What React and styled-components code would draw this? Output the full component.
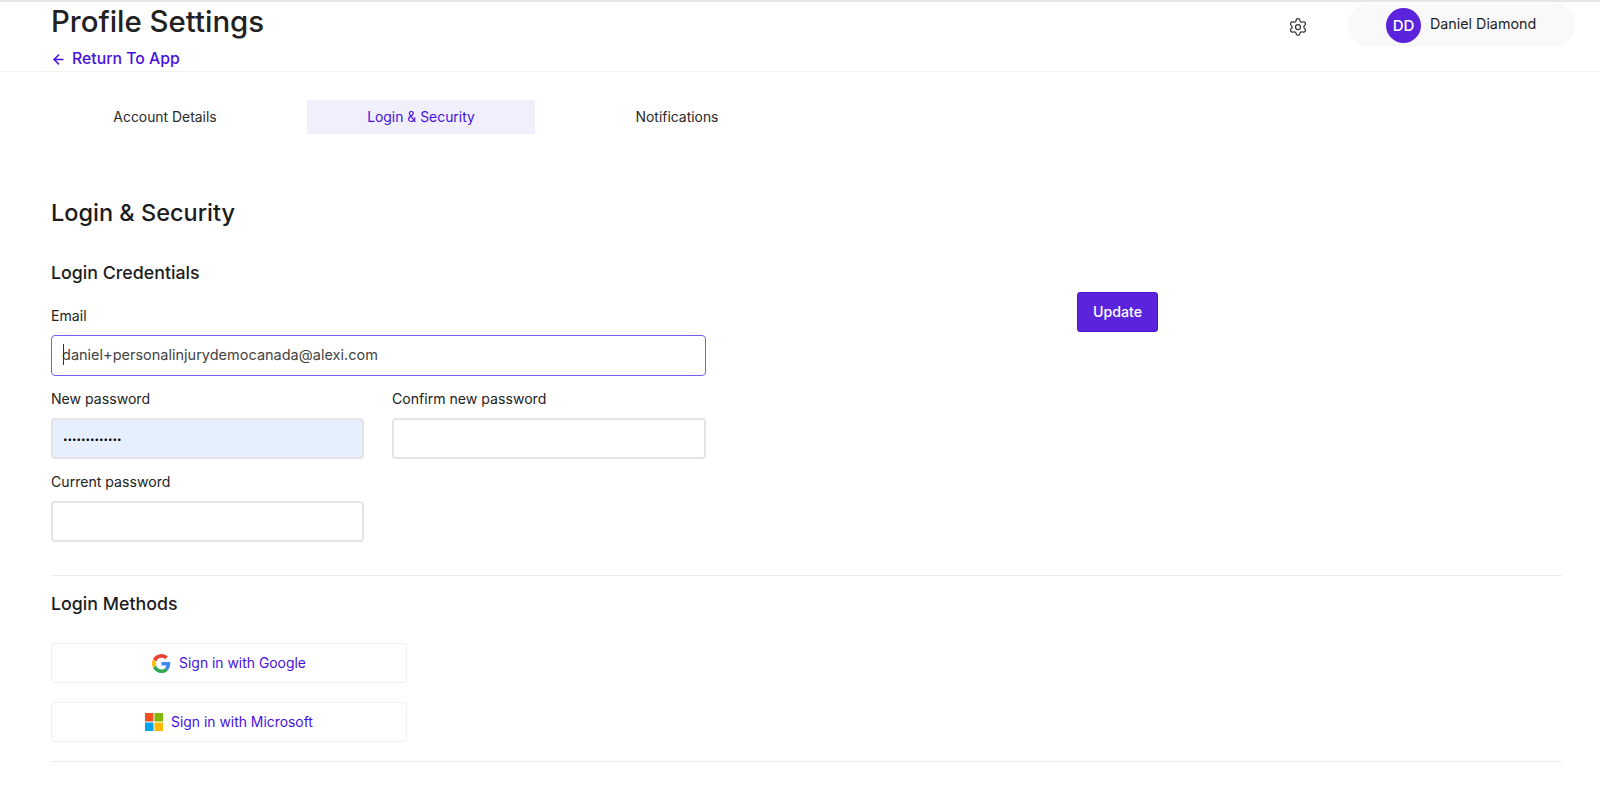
import React from 'react';
import styled, { createGlobalStyle } from 'styled-components';
import { Settings, ArrowLeft } from 'lucide-react';

const Global = createGlobalStyle`
  html, body { margin: 0; padding: 0; background: #fff; }
  body { font-family: Inter, "Open Sans", sans-serif; color: #1c1c1e; }
  * { box-sizing: border-box; }
`;
const Page = styled.div`height: 809px; overflow: hidden; border-top: 2px solid #e6e6e8;`;
const Header = styled.header`
  height: 70px; padding: 0 25px 0 51px; border-bottom: 1px solid #f3f3f4;
  display: flex; justify-content: space-between; align-items: flex-start;
`;
const TitleBlock = styled.div`display: flex; flex-direction: column; align-items: flex-start;`;
const Title = styled.h1`margin: 2px 0 0; font-size: 29.4px; line-height: 36px; font-weight: 500; color: #222;`;
const BackLink = styled.a`
  margin-top: 8px; display: flex; align-items: center; gap: 6px;
  font-size: 15.8px; line-height: 22px; font-weight: 500; color: #4610e0;
`;
const HeaderRight = styled.div`display: flex; align-items: center; gap: 40px; margin-top: 1px;`;
const Gear = styled(Settings)`color: #333; display: block; margin-top: 3px;`;
const UserPill = styled.div`
  width: 227px; height: 44px; border-radius: 22px; background: #f9f9fa;
  display: flex; align-items: center; gap: 9px; padding-left: 38px;
`;
const Avatar = styled.div`
  width: 35px; height: 35px; border-radius: 50%; background: #5b24dc; color: #fff;
  display: flex; align-items: center; justify-content: center; font-size: 15px; font-weight: 500;
`;
const UserName = styled.span`font-size: 14.3px; color: #1e1e28; margin-bottom: 3px;`;
const Tabs = styled.nav`display: flex; margin: 28px 0 0 51px;`;
const Tab = styled.div`
  width: ${p => p.$w}px; height: 34px; margin-right: ${p => p.$mr}px;
  display: flex; align-items: center; justify-content: center;
  font-size: 13.9px; color: ${p => (p.$active ? '#4610e0' : '#2a2a2a')};
  background: ${p => (p.$active ? '#f1effc' : 'transparent')};
`;
const Content = styled.main`padding: 0 38px 0 51px;`;
const PageHeading = styled.h2`margin: 63px 0 0; font-size: 23.5px; line-height: 32px; font-weight: 500; color: #1c1c1e;`;
const SectionHeading = styled.h3`
  margin: ${p => p.$mt}px 0 0; font-size: 17.8px; line-height: 24px; font-weight: 500; color: #1c1c1e;
`;
const CredRow = styled.div`display: flex; align-items: flex-start; margin-top: 21px;`;
const Form = styled.div`
  width: 655px; display: grid; grid-template-columns: 313px 1fr; column-gap: 28px; row-gap: 13px;
`;
const Field = styled.label`display: block; grid-column: ${p => (p.$full ? '1 / -1' : 'auto')};`;
const LabelText = styled.div`font-size: 14.1px; line-height: 20px; color: #222; margin-bottom: 9px;`;
const InputWrap = styled.div`position: relative;`;
const Input = styled.input`
  display: block; width: 100%; height: 41px; padding: 0 10px ${p => (p.$focus ? 2 : 0)}px; border-radius: 4px; outline: none;
  font-family: inherit; font-size: ${p => (p.$auto ? 8 : 14.5)}px; color: ${p => (p.$auto ? '#000' : '#444')};
  border: ${p => (p.$focus ? '1px solid #7a5cf0' : '2px solid #e4e4e6')};
  background: ${p => (p.$auto ? '#e5effd' : '#fff')};
`;
const Caret = styled.span`position: absolute; left: 12px; top: 9px; width: 1px; height: 21px; background: #333;`;
const UpdateButton = styled.button`
  margin: -14px 0 0 371px; width: 81px; height: 40px; padding-bottom: 2px; border-radius: 3px; border: 1px solid #4a16d0;
  background: #5b24dc; color: #fff; font-family: inherit; font-size: 14.2px; font-weight: 500;
`;
const Divider = styled.hr`margin: ${p => p.$mt}px 0 0; border: 0; border-top: 1px solid #ededee;`;
const Providers = styled.div`width: 356px; margin-top: 27px; display: flex; flex-direction: column; gap: 19px;`;
const ProviderButton = styled.button`
  height: 40px; display: flex; align-items: center; justify-content: center; gap: 8px;
  background: #fff; border: 1px solid #f0f0f1; border-radius: 3px;
  font-family: inherit; font-size: 13.9px; color: #4610e0;
`;

const GoogleLogo = () => (
  <svg width="19" height="19" viewBox="0 0 48 48">
    <path fill="#EA4335" d="M24 9.5c3.5 0 6.6 1.2 9.1 3.6l6.8-6.8C35.8 2.5 30.4 0 24 0 14.6 0 6.5 5.4 2.6 13.2l7.9 6.2C12.4 13.7 17.7 9.5 24 9.5z"/>
    <path fill="#4285F4" d="M46.1 24.5c0-1.6-.1-3.1-.4-4.5H24v9h12.4c-.5 2.9-2.2 5.4-4.6 7l7.2 5.6c4.2-3.9 7.1-9.6 7.1-17.1z"/>
    <path fill="#FBBC05" d="M10.5 28.6c-.5-1.4-.8-3-.8-4.6s.3-3.2.8-4.6l-7.9-6.2C1 16.5 0 20.1 0 24s1 7.5 2.6 10.8l7.9-6.2z"/>
    <path fill="#34A853" d="M24 48c6.5 0 11.9-2.1 15.9-5.8l-7.2-5.6c-2.2 1.5-5.1 2.4-8.7 2.4-6.3 0-11.6-4.2-13.5-9.9l-7.9 6.2C6.5 42.6 14.6 48 24 48z"/>
  </svg>
);
const MicrosoftLogo = () => (
  <svg width="18" height="18" viewBox="0 0 18 18">
    <rect width="8.5" height="8.5" fill="#F25022"/>
    <rect x="9.5" width="8.5" height="8.5" fill="#7FBA00"/>
    <rect y="9.5" width="8.5" height="8.5" fill="#00A4EF"/>
    <rect x="9.5" y="9.5" width="8.5" height="8.5" fill="#FFB900"/>
  </svg>
);

export default function App() {
  return (
    <Page>
      <Global />
      <Header>
        <TitleBlock>
          <Title>Profile Settings</Title>
          <BackLink><ArrowLeft size={15} strokeWidth={2.4} />Return To App</BackLink>
        </TitleBlock>
        <HeaderRight>
          <Gear size={20} strokeWidth={1.5} />
          <UserPill>
            <Avatar>DD</Avatar>
            <UserName>Daniel Diamond</UserName>
          </UserPill>
        </HeaderRight>
      </Header>
      <Tabs>
        <Tab $w={228} $mr={28}>Account Details</Tab>
        <Tab $w={228} $mr={28} $active>Login &amp; Security</Tab>
        <Tab $w={228} $mr={0}>Notifications</Tab>
      </Tabs>
      <Content>
        <PageHeading>Login &amp; Security</PageHeading>
        <SectionHeading $mt={32}>Login Credentials</SectionHeading>
        <CredRow>
          <Form>
            <Field $full>
              <LabelText>Email</LabelText>
              <InputWrap>
                <Input $focus readOnly value="daniel+personalinjurydemocanada@alexi.com" />
                <Caret />
              </InputWrap>
            </Field>
            <Field>
              <LabelText>New password</LabelText>
              <Input $auto readOnly type="password" value="abcdefghijklm" />
            </Field>
            <Field>
              <LabelText>Confirm new password</LabelText>
              <Input readOnly />
            </Field>
            <Field>
              <LabelText>Current password</LabelText>
              <Input readOnly />
            </Field>
          </Form>
          <UpdateButton>Update</UpdateButton>
        </CredRow>
        <Divider $mt={33} />
        <SectionHeading $mt={16}>Login Methods</SectionHeading>
        <Providers>
          <ProviderButton><GoogleLogo />Sign in with Google</ProviderButton>
          <ProviderButton><MicrosoftLogo />Sign in with Microsoft</ProviderButton>
        </Providers>
        <Divider $mt={19} />
      </Content>
    </Page>
  );
}
